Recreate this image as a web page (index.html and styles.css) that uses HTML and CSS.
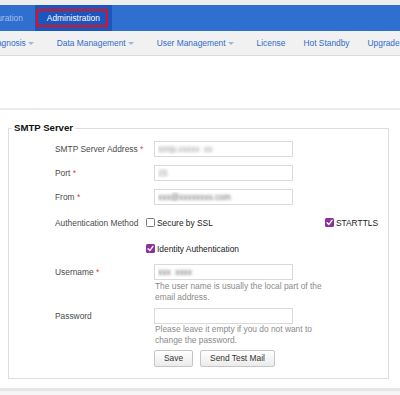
FILE: index.html
```html
<!DOCTYPE html>
<html>
<head>
<meta charset="utf-8">
<link rel="stylesheet" href="styles.css">
</head>
<body>
<header class="header">
  <div class="topstrip"></div>
  <nav class="mainbar">
    <div class="tabs">
      <span class="tab">Configuration</span>
      <span class="tab active">Administration</span>
    </div>
  </nav>
  <nav class="subbar">
    <div class="subitems">
      <span class="sub">Diagnosis<i class="caret"></i></span>
      <span class="sub">Data Management<i class="caret"></i></span>
      <span class="sub">User Management<i class="caret"></i></span>
      <span class="sub">License</span>
      <span class="sub">Hot Standby</span>
      <span class="sub">Upgrade</span>
    </div>
  </nav>
</header>
<main class="content">
  <div class="spacer"></div>
  <section class="panel">
    <fieldset class="box">
      <legend class="legend">SMTP Server</legend>
      <div class="form">
        <div class="row r1">
          <div class="label">SMTP Server Address <span class="req">*</span></div>
          <div class="ctrl"><input class="field" type="text" value="smtp.xxxxx &nbsp;xx"></div>
        </div>
        <div class="row r2">
          <div class="label">Port <span class="req">*</span></div>
          <div class="ctrl"><input class="field" type="text" value="25"></div>
        </div>
        <div class="row r3">
          <div class="label">From <span class="req">*</span></div>
          <div class="ctrl"><input class="field dark" type="text" value="xxx@xxxxxxxx.com"></div>
        </div>
        <div class="row rauth">
          <div class="label">Authentication Method</div>
          <div class="ctrl checks">
            <span class="check"><span class="cb"></span>Secure by SSL</span>
            <span class="check"><span class="cb on"><svg viewBox="0 0 9 9" width="9" height="9"><path d="M2.1 4.7 L3.8 6.6 L7 2.3" fill="none" stroke="#fff" stroke-width="1.4" stroke-linecap="round" stroke-linejoin="round"/></svg></span>STARTTLS</span>
          </div>
        </div>
        <div class="row rident">
          <div class="label"></div>
          <div class="ctrl checks">
            <span class="check"><span class="cb on"><svg viewBox="0 0 9 9" width="9" height="9"><path d="M2.1 4.7 L3.8 6.6 L7 2.3" fill="none" stroke="#fff" stroke-width="1.4" stroke-linecap="round" stroke-linejoin="round"/></svg></span>Identity Authentication</span>
          </div>
        </div>
        <div class="row ruser">
          <div class="label">Username <span class="req">*</span></div>
          <div class="ctrl">
            <input class="field dark" type="text" value="xxx &nbsp;xxxx">
            <p class="hint hint-user">The user name is usually the local part of the email address.</p>
          </div>
        </div>
        <div class="row rpass">
          <div class="label">Password</div>
          <div class="ctrl">
            <input class="field" type="password" value="">
            <p class="hint">Please leave it empty if you do not want to change the password.</p>
          </div>
        </div>
        <div class="row rbtn">
          <div class="label"></div>
          <div class="ctrl buttons">
            <button class="btn" type="button">Save</button>
            <button class="btn" type="button">Send Test Mail</button>
          </div>
        </div>
      </div>
    </fieldset>
  </section>
  <div class="below"></div>
</main>
</body>
</html>
```
FILE: styles.css
```css
html, body {
  margin: 0;
  padding: 0;
  background: #ffffff;
}
body {
  font-family: "Liberation Sans", Arial, Helvetica, sans-serif;
  font-size: 8.4px;
  color: #444;
  width: 400px;
  height: 395px;
  overflow: hidden;
}

/* header */
.topstrip {
  height: 5px;
  background: #eeeeee;
}
.mainbar {
  height: 26px;
  background: #2f6fcf;
  overflow: hidden;
}
.tabs {
  display: flex;
  margin-left: -39px;
  height: 26px;
}
.tab {
  position: relative;
  display: block;
  padding: 0 12px;
  line-height: 26px;
  color: #a9bee8;
  white-space: nowrap;
}
.tab.active {
  background: #1b55bd;
  color: #ffffff;
}
.tab.active::after {
  content: "";
  position: absolute;
  left: 1px;
  right: 4px;
  top: 4px;
  bottom: 4px;
  border: 2px solid #e3101c;
}

.subbar {
  height: 24px;
  background: #f1f1f1;
  border-bottom: 1px solid #dcdcdc;
  overflow: hidden;
}
.subitems {
  display: flex;
  align-items: center;
  height: 24px;
  margin-left: -20px;
  white-space: nowrap;
}
.sub {
  display: flex;
  align-items: center;
  padding: 0 9px;
  color: #2f6cc6;
}
.caret {
  display: block;
  width: 0;
  height: 0;
  border-left: 3px solid transparent;
  border-right: 3px solid transparent;
  border-top: 3px solid #9fb6d8;
  margin: 1px 5px 0 2px;
}

/* content */
.spacer {
  height: 52px;
}
.panel {
  border-top: 2px solid #ececec;
  border-bottom: 3px solid #e6e6e6;
  padding: 12px 0 9px;
}
.below {
  height: 10px;
  background: #f6f6f6;
}
.box {
  margin: 0 11px 0 8px;
  padding: 7px 10px 11px 3px;
  border: 1px solid #dddddd;
  min-width: 0;
}
.legend {
  padding: 0 2px;
  font-size: 9.6px;
  font-weight: bold;
  line-height: 12px;
  color: #111;
}
.form {
  padding-left: 43px;
}
.row {
  display: grid;
  grid-template-columns: 99px 1fr;
  align-items: start;
}
.label {
  line-height: 16px;
  color: #4a4a4a;
  white-space: nowrap;
}
.req {
  color: #e23a3a;
}
.ctrl {
  display: flex;
  flex-direction: column;
  align-items: flex-start;
}
.r1, .r2 {
  margin-bottom: 8px;
}
.r3 {
  margin-bottom: 9px;
}
.rauth {
  height: 17px;
  align-items: center;
  margin-bottom: 9px;
}
.rident {
  height: 17px;
  align-items: center;
  margin-bottom: 7px;
}
.ruser {
  margin-bottom: 5px;
}
.rpass {
  margin-bottom: 4px;
}

.field {
  box-sizing: border-box;
  width: 139px;
  height: 16px;
  margin: 0;
  padding: 0 3px;
  border: 1px solid #d9d9d9;
  border-radius: 0;
  background: #fff;
  font-family: "Liberation Sans", Arial, sans-serif;
  font-size: 8.4px;
  color: transparent;
  text-shadow: 0 0 3.5px #8a8a8a;
  outline: none;
}
.field.dark {
  text-shadow: 0 0 3px #5e5e5e;
}

.checks {
  flex-direction: row;
  justify-content: space-between;
  align-items: center;
  margin-left: -8px;
}
.check {
  display: flex;
  align-items: center;
  color: #222;
  line-height: 12px;
  white-space: nowrap;
}
.cb {
  box-sizing: border-box;
  display: block;
  width: 9px;
  height: 9px;
  margin-right: 2px;
  border: 1px solid #777;
  border-radius: 1.5px;
  background: #fff;
}
.cb.on {
  border: none;
  background: #8d2f9d;
}
.cb svg {
  display: block;
}

.hint {
  margin: 0;
  width: 176px;
  line-height: 11px;
  color: #8a8a8a;
  padding-left: 1px;
}
.hint-user {
  margin-top: 1px;
}

.buttons {
  flex-direction: row;
  gap: 7px;
}
.btn {
  box-sizing: border-box;
  height: 17px;
  margin: 0;
  padding: 0 9px;
  border: 1px solid #c6c6c6;
  border-radius: 2px;
  background: linear-gradient(#ffffff, #ebebeb);
  font-family: "Liberation Sans", Arial, sans-serif;
  font-size: 8.4px;
  color: #333;
  line-height: 15px;
}
```
